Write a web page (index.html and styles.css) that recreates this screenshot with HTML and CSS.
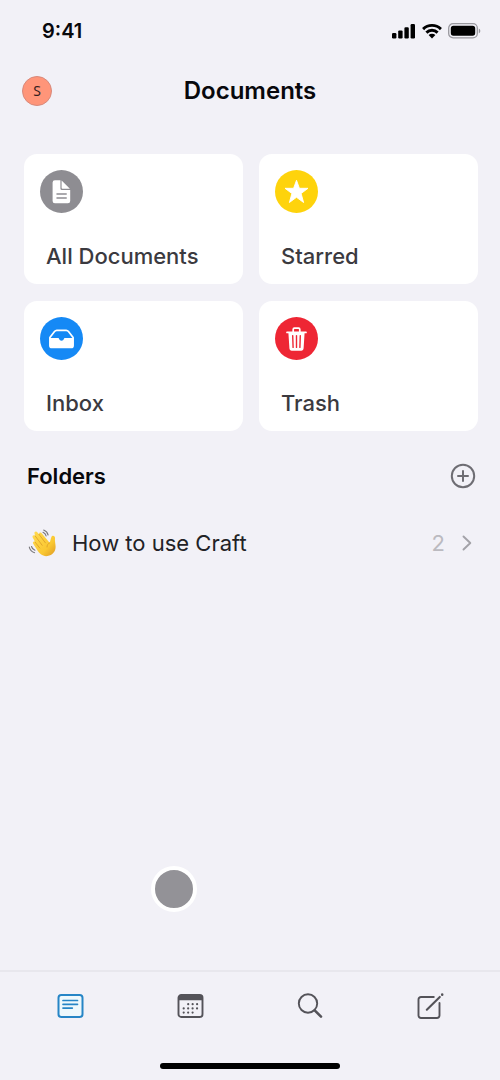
FILE: index.html
```html
<!DOCTYPE html>
<html lang="en">
<head>
<meta charset="utf-8">
<meta name="viewport" content="width=device-width, initial-scale=1">
<title>Documents</title>
<link rel="stylesheet" href="styles.css">
</head>
<body>
<div class="app">
  <div class="status">
    <time class="clock">9:41</time>
    <div class="signals">
      <svg width="24" height="16" viewBox="0 0 24 16" aria-hidden="true"><rect x="0" y="10" width="4.4" height="5.5" rx="1.2"/><rect x="6.2" y="7.4" width="4.4" height="8.1" rx="1.2"/><rect x="12.4" y="4.3" width="4.4" height="11.2" rx="1.2"/><rect x="18.6" y="1" width="4.4" height="14.5" rx="1.2"/></svg>
      <svg width="20" height="16" viewBox="0 0 20 16" aria-hidden="true"><g fill="none" stroke="#000" stroke-width="2.9"><path d="M1.1 6.1a12.6 12.6 0 0 1 17.8 0"/><path d="M4.4 9.6a8 8 0 0 1 11.2 0"/></g><path d="M6.6 12.1a4.9 4.9 0 0 1 6.8 0L10 15.5z"/></svg>
      <svg class="battery" width="33" height="16" viewBox="0 0 33 16" aria-hidden="true"><rect x=".7" y=".7" width="28.6" height="14.1" rx="4.4" fill="none" stroke="#99989e" stroke-width="1.3"/><rect x="2.8" y="2.8" width="24.4" height="9.9" rx="2.6"/><path d="M30.8 5.4c2 .8 2 4 0 4.8z" fill="#99989e"/></svg>
    </div>
  </div>
  <header class="header">
    <button class="avatar" type="button" aria-label="Account">S</button>
    <h1 class="title">Documents</h1>
  </header>
  <main class="content">
    <div class="cards">
      <button class="card" type="button">
        <svg class="badge" viewBox="0 0 43 43" aria-hidden="true"><circle cx="21.5" cy="21.5" r="21.5" fill="#8e8d92"/><path d="M14.9 10.3H20.400v8.200a1.600 1.600 0 0 0 1.600 1.600h8.200V31a2.300 2.300 0 0 1-2.300 2.300H14.900a2.300 2.300 0 0 1-2.300-2.300V12.600a2.300 2.300 0 0 1 2.300-2.300z" fill="#fff"/><path d="M21.600 10.500l8.300 8.200h-7.400a.9.9 0 0 1-.9-.9z" fill="#fff"/><path d="M17 24h9.200M17 28.100h9.200" stroke="#8e8d92" stroke-width="1.500" stroke-linecap="round"/></svg>
        <span class="label">All Documents</span>
      </button>
      <button class="card" type="button">
        <svg class="badge" viewBox="0 0 43 43" aria-hidden="true"><circle cx="21.5" cy="21.5" r="21.5" fill="#fed30c"/><path d="M21.5 10.3l2.9 8h8.6l-6.900 5.200 2.500 9-7.100-5.200-7.100 5.200 2.500-9L10 18.300h8.600z" fill="#fff" stroke="#fff" stroke-width=".9" stroke-linejoin="round"/></svg>
        <span class="label">Starred</span>
      </button>
      <button class="card" type="button">
        <svg class="badge" viewBox="0 0 43 43" aria-hidden="true"><circle cx="21.5" cy="21.5" r="21.5" fill="#1589f5"/><path d="M9.900 20.600l4.600-6.100c.7-.9 1.300-1.200 2.300-1.200h9.400c1 0 1.600.3 2.300 1.200l4.600 6.100v7.900a2 2 0 0 1-2 2H11.900a2 2 0 0 1-2-2z" fill="none" stroke="#fff" stroke-width="1.700" stroke-linejoin="round"/><path d="M9.900 21h8.300c.6 0 .8.3.9.9a2.500 2.500 0 0 0 4.800 0c.1-.6.3-.9.9-.9h8.300v8.400a1.600 1.600 0 0 1-1.600 1.600h-20a1.600 1.600 0 0 1-1.600-1.600z" fill="#fff"/></svg>
        <span class="label">Inbox</span>
      </button>
      <button class="card" type="button">
        <svg class="badge" viewBox="0 0 43 43" aria-hidden="true"><circle cx="21.5" cy="21.5" r="21.5" fill="#ee2634"/><path d="M12 15.400h19M18.200 15v-2.600c0-.8.4-1.200 1.200-1.200h4.200c.8 0 1.200.4 1.200 1.200V15" fill="none" stroke="#fff" stroke-width="1.700" stroke-linecap="round"/><path d="M13.400 15.800h16.200l-1 15.500c-.1 1.600-.9 2.400-2.400 2.400h-9.400c-1.500 0-2.300-.8-2.400-2.400z" fill="#fff"/><path d="M17.700 18.600l.4 11.800M21.500 18.600v11.800M25.300 18.600l-.4 11.800" stroke="#ee2634" stroke-width="1.400" stroke-linecap="round"/></svg>
        <span class="label">Trash</span>
      </button>
    </div>
    <section>
      <div class="section-head">
        <h2 class="section-title">Folders</h2>
        <button class="add" type="button" aria-label="Add folder">
          <svg width="26" height="26" viewBox="0 0 26 26" fill="none" stroke="#6e6d73" stroke-width="2" stroke-linecap="round" aria-hidden="true"><circle cx="13" cy="13" r="11.2"/><path d="M13 8v10M8 13h10"/></svg>
        </button>
      </div>
      <a class="folder" href="#">
        <svg width="30" height="30" viewBox="0 0 30 30" aria-hidden="true">
          <defs><linearGradient id="skin" x1="0" y1="0" x2="1" y2="1"><stop offset="0" stop-color="#ffdb52"/><stop offset=".65" stop-color="#fac832"/><stop offset="1" stop-color="#dd9823"/></linearGradient></defs>
          <path d="M9 21.800L5.200 15.700C4.200 14 6 12.900 7.100 14.100L4.700 9.400C3.900 7.600 6 6.400 7.200 8L6.500 5.600C6 3.600 8.200 2.700 9.500 4.500L11 6.300C10.900 4.400 12.900 4 13.900 5.500L21.600 14.800C22.300 13.400 22.400 11.700 23.300 9.300C24.200 6.800 27.300 7.800 27 10.200C26.700 12.700 27.400 15.400 27.600 18.600C27.800 23.400 24.500 27.500 19.500 28.100C14.500 28.600 11.300 25.600 9 21.800z" fill="url(#skin)"/>
          <path d="M7.100 14.100l4.600 5.900M7.200 8l7 9.300M11 6.300l6.400 8.500M21.600 14.800c-1.700.9-2.600 2.300-2.600 4.200" fill="none" stroke="#dea02b" stroke-width=".9" stroke-linecap="round"/>
          <path d="M15.700 2.100c2.200.9 3.800 2.600 4.400 4.900M15 4.300c1.600.7 2.600 1.900 3.100 3.600M1.300 19.100c.6 2.800 2.600 4.800 5.300 5.600M3.500 18.500c.4 1.700 1.700 3.100 3.400 3.700" fill="none" stroke="#77767a" stroke-width="1.100" stroke-linecap="round"/>
        </svg>
        <span class="folder-name">How to use Craft</span>
        <span class="count">2</span>
        <svg width="10" height="16" viewBox="0 0 10 16" fill="none" stroke="#a3a2a8" stroke-width="1.900" stroke-linecap="round" stroke-linejoin="round" aria-hidden="true"><path d="M1.500 1.500L8.300 8l-6.800 6.500"/></svg>
      </a>
    </section>
    <span class="touch"></span>
  </main>
  <nav class="tabs">
    <button class="tab active" type="button" aria-label="Documents">
      <svg width="28" height="28" viewBox="0 0 28 28" fill="none" stroke="currentColor" stroke-width="2" stroke-linecap="round" aria-hidden="true"><rect x="2.500" y="3" width="24" height="22" rx="2.800" fill="#eef8fc"/><path d="M7 8.500h14.500M7 12.300h14.500M7 16.100h9.300" stroke-width="1.700"/></svg>
    </button>
    <button class="tab" type="button" aria-label="Calendar">
      <svg width="28" height="28" viewBox="0 0 28 28" aria-hidden="true"><rect x="2.500" y="3" width="24" height="22" rx="2.800" fill="none" stroke="currentColor" stroke-width="1.900"/><path d="M2.500 8.200V5a2 2 0 0 1 2-2h20a2 2 0 0 1 2 2v3.200z" fill="currentColor"/><path d="M12.200 12.200h9.200M7.700 16.400h13.500M7.700 20.600h9.200" stroke="currentColor" stroke-width="2.200" stroke-linecap="round" stroke-dasharray="0 4.450"/></svg>
    </button>
    <button class="tab" type="button" aria-label="Search">
      <svg width="28" height="28" viewBox="0 0 28 28" fill="none" stroke="currentColor" stroke-linecap="round" aria-hidden="true"><circle cx="12" cy="11.500" r="9.200" stroke-width="1.900"/><path d="M18.700 18.300l6.300 6.300" stroke-width="2.600"/></svg>
    </button>
    <button class="tab" type="button" aria-label="New document">
      <svg width="28" height="28" viewBox="0 0 28 28" fill="none" stroke="currentColor" stroke-width="1.900" stroke-linecap="round" aria-hidden="true"><path d="M17.800 5H5a2.500 2.500 0 0 0-2.500 2.500V23.500A2.500 2.500 0 0 0 5 26h16a2.500 2.500 0 0 0 2.500-2.500V11"/><path d="M10.800 17.700L23.800 4.900" stroke-width="2.100"/><path d="M26.200 2.600v.1" stroke-width="2.500"/></svg>
    </button>
  </nav>
  <div class="home"><span class="home-bar"></span></div>
</div>
</body>
</html>
```
FILE: styles.css
```css
* { box-sizing: border-box; }
body {
  margin: 0;
  background: #f2f1f7;
  color: #08080c;
  font-family: Inter, "Liberation Sans", sans-serif;
}
button {
  margin: 0;
  padding: 0;
  border: 0;
  background: none;
  color: inherit;
  font: inherit;
}
svg { display: block; flex: none; }
.app { display: flex; flex-direction: column; min-height: 100vh; }
.status {
  display: flex;
  align-items: center;
  justify-content: space-between;
  min-height: 61px;
  padding: 0 19px 0 42px;
}
.clock { font-size: 20px; font-weight: 600; line-height: 24px; }
.signals { display: flex; align-items: center; gap: 6px; }
.header {
  display: grid;
  grid-template-columns: 30px 1fr 30px;
  align-items: center;
  min-height: 60px;
  padding: 0 22px;
}
.avatar {
  width: 30px;
  height: 30px;
  border: 1px solid #d8897b;
  border-radius: 50%;
  background: #ff9579;
  color: #33201f;
  font-family: "Noto Sans", sans-serif;
  font-size: 14px;
  line-height: 28px;
  text-align: center;
}
.title { margin: 0; font-size: 24px; font-weight: 600; line-height: 30px; text-align: center; }
.content {
  position: relative;
  flex: 1;
  padding: 33px 22px 24px 24px;
}
.cards { display: grid; grid-template-columns: 1fr 1fr; gap: 17px 16px; }
.card {
  display: flex;
  flex-direction: column;
  align-items: flex-start;
  justify-content: space-between;
  min-height: 130px;
  padding: 16px 16px 13px;
  border-radius: 13px;
  background: #fff;
}
.badge { width: 43px; height: 43px; }
.label {
  padding-left: 6px;
  color: #3b3a3f;
  font-size: 22px;
  font-weight: 500;
  line-height: 30px;
}
.section-head {
  display: flex;
  align-items: center;
  justify-content: space-between;
  margin-top: 30px;
  padding: 0 2px 0 3px;
}
.section-title { margin: 0; font-size: 22px; font-weight: 600; line-height: 30px; }
.folder {
  display: flex;
  align-items: center;
  margin-top: 35px;
  padding: 2px 6px 2px 4px;
  color: #222226;
  font-size: 22px;
  line-height: 30px;
  text-decoration: none;
}
.folder-name { flex: 1; padding-left: 14px; }
.count { padding-right: 17px; color: #bbbac0; }
.touch {
  position: absolute;
  top: 745px;
  left: 151px;
  width: 46px;
  height: 46px;
  border: 4px solid #fff;
  border-radius: 50%;
  background: #939297;
}
.tabs {
  display: grid;
  grid-template-columns: repeat(4, 1fr);
  padding: 20px 10px 28px;
  border-top: 2px solid #e8e7ed;
}
.tab { display: flex; justify-content: center; color: #545359; }
.tab.active { color: #2685c6; }
.home { display: flex; justify-content: center; padding: 15px 0 11px; }
.home-bar { width: 36%; height: 6px; border-radius: 3px; background: #000; }
```
